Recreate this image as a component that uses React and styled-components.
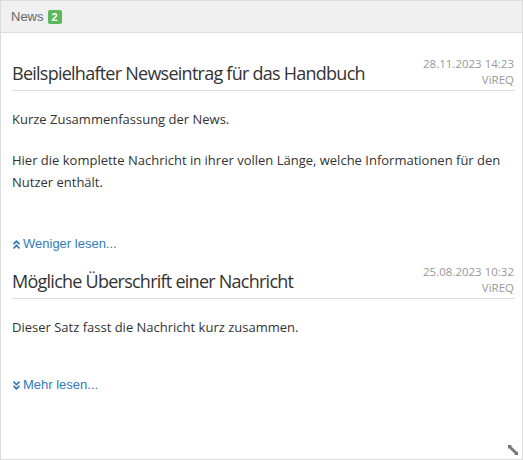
import React from "react";
import styled, { createGlobalStyle } from "styled-components";
import { FaAngleDoubleUp, FaAngleDoubleDown } from "react-icons/fa";

const Global = createGlobalStyle`
  html, body { margin: 0; padding: 0; background: #fff; }
  * { box-sizing: border-box; }
`;

const Panel = styled.div`
  width: 523px;
  height: 460px;
  border: 1px solid #dcdcdc;
  display: flex;
  flex-direction: column;
  position: relative;
  background: #fff;
`;

const Header = styled.div`
  height: 32px;
  background: #f0f0f0;
  border-bottom: 1px solid #dcdcdc;
  display: flex;
  align-items: center;
  gap: 4px;
  padding-left: 10px;
  font-family: "Liberation Sans", Arial, sans-serif;
  font-size: 13px;
  color: #666;
`;

const Badge = styled.span`
  display: inline-flex;
  align-items: center;
  justify-content: center;
  width: 14px;
  height: 14px;
  border-radius: 2px;
  background: #5cb85c;
  color: #fff;
  font-weight: bold;
  font-size: 11px;
`;

const List = styled.div`
  display: flex;
  flex-direction: column;
  padding: 23px 8px 0 11px;
`;

const Item = styled.div`
  display: flex;
  flex-direction: column;
  margin-bottom: ${(p) => p.$gap}px;
`;

const TitleRow = styled.div`
  display: flex;
  justify-content: space-between;
  align-items: flex-end;
  border-bottom: 1px solid #dcdcdc;
`;

const Title = styled.h2`
  margin: 0 0 4px 0;
  font-family: "Open Sans", sans-serif;
  font-weight: 400;
  font-size: 18px;
  letter-spacing: -0.75px;
  line-height: 26px;
  color: #333;
`;

const Meta = styled.div`
  text-align: right;
  font-family: "Open Sans", sans-serif;
  font-size: 11.5px;
  line-height: 16px;
  color: #999;
  padding-bottom: 2px;
`;

const Body = styled.div`
  padding-top: 17px;
  font-family: "Open Sans", sans-serif;
  font-size: 13px;
  line-height: 22px;
  color: #333;
`;

const Para = styled.p`
  margin: 0 0 19px 0;
`;

const Toggle = styled.a`
  display: inline-flex;
  align-items: center;
  gap: 1px;
  margin-top: ${(p) => p.$top}px;
  margin-left: -1px;
  font-family: "Liberation Sans", Arial, sans-serif;
  font-size: 13px;
  line-height: 16px;
  color: #337ab7;
  cursor: pointer;
  text-decoration: none;
  svg { width: 11px; height: 11px; }
`;

const Resize = styled.svg`
  position: absolute;
  right: 4px;
  bottom: 4px;
`;

export default function App() {
  return (
    <>
      <Global />
      <Panel>
        <Header>
          News <Badge>2</Badge>
        </Header>
        <List>
          <Item $gap={12}>
            <TitleRow>
              <Title>Beilspielhafter Newseintrag für das Handbuch</Title>
              <Meta>
                28.11.2023 14:23
                <br />
                ViREQ
              </Meta>
            </TitleRow>
            <Body>
              <Para>Kurze Zusammenfassung der News.</Para>
              <Para>
                Hier die komplette Nachricht in ihrer vollen Länge, welche
                Informationen für den Nutzer enthält.
              </Para>
            </Body>
            <Toggle $top={24}>
              <FaAngleDoubleUp /> Weniger lesen...
            </Toggle>
          </Item>
          <Item $gap={0}>
            <TitleRow>
              <Title>Mögliche Überschrift einer Nachricht</Title>
              <Meta>
                25.08.2023 10:32
                <br />
                ViREQ
              </Meta>
            </TitleRow>
            <Body>
              <Para>Dieser Satz fasst die Nachricht kurz zusammen.</Para>
            </Body>
            <Toggle $top={20}>
              <FaAngleDoubleDown /> Mehr lesen...
            </Toggle>
          </Item>
        </List>
        <Resize width="10" height="10" viewBox="0 0 10 10">
          <path d="M0 0 H4 L3 1 L9 7 L10 6 V10 H6 L7 9 L1 3 L0 4 Z" fill="#777" />
        </Resize>
      </Panel>
    </>
  );
}
